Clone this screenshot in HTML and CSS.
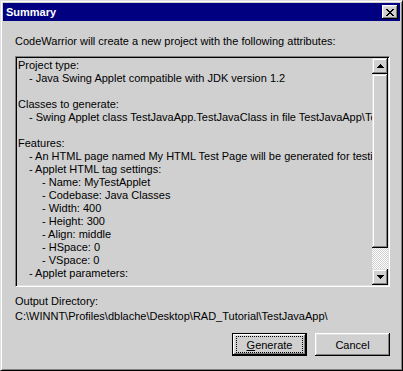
FILE: index.html
```html
<!DOCTYPE html>
<html>
	<head>
		<link rel="stylesheet" href="styles.css">
		<title>Summary</title>
	</head>
	<body>
		<main class="window">
			<header class="titlebar">
				<span class="title">Summary</span>
				<button class="close" aria-label="Close">
					<svg width="8" height="7" viewBox="0 0 8 7" shape-rendering="crispEdges">
						<path d="M0 0h2v1h-2zM6 0h2v1h-2zM1 1h2v1h-2zM5 1h2v1h-2zM2 2h4v1h-4zM3 3h2v1h-2zM2 4h4v1h-4zM1 5h2v1h-2zM5 5h2v1h-2zM0 6h2v1h-2zM6 6h2v1h-2z" fill="#000"/>
					</svg>
				</button>
			</header>
			<section class="content">
				<p class="intro">CodeWarrior will create a new project with the following attributes:</p>
				<div class="listbox">
					<div class="list-text">
						<div>Project type:</div>
						<div class="i1">- Java Swing Applet compatible with JDK version 1.2</div>
						<div class="blank"></div>
						<div>Classes to generate:</div>
						<div class="i1">- Swing Applet class TestJavaApp.TestJavaClass in file TestJavaApp\TestJavaClass.java</div>
						<div class="blank"></div>
						<div>Features:</div>
						<div class="i1">- An HTML page named My HTML Test Page will be generated for testing</div>
						<div class="i1">- Applet HTML tag settings:</div>
						<div class="i2">- Name: MyTestApplet</div>
						<div class="i2">- Codebase: Java Classes</div>
						<div class="i2">- Width: 400</div>
						<div class="i2">- Height: 300</div>
						<div class="i2">- Align: middle</div>
						<div class="i2">- HSpace: 0</div>
						<div class="i2">- VSpace: 0</div>
						<div class="i1">- Applet parameters:</div>
					</div>
					<div class="scrollbar">
						<div class="sb-btn">
							<svg width="7" height="4" viewBox="0 0 7 4" shape-rendering="crispEdges">
								<path d="M3 0h1v1h-1zM2 1h3v1h-3zM1 2h5v1h-5zM0 3h7v1h-7z" fill="#000"/>
							</svg>
						</div>
						<div class="sb-thumb"></div>
						<div class="sb-track"></div>
						<div class="sb-btn">
							<svg width="7" height="4" viewBox="0 0 7 4" shape-rendering="crispEdges">
								<path d="M0 0h7v1h-7zM1 1h5v1h-5zM2 2h3v1h-3zM3 3h1v1h-1z" fill="#000"/>
							</svg>
						</div>
					</div>
				</div>
				<p class="label">Output Directory:</p>
				<p class="path">C:\WINNT\Profiles\dblache\Desktop\RAD_Tutorial\TestJavaApp\</p>
				<div class="buttons">
					<button class="btn default"><span class="focus"><u>G</u>enerate</span></button>
					<button class="btn">Cancel</button>
				</div>
			</section>
		</main>
	</body>
</html>
```
FILE: styles.css
```css
body{ margin: 0; background: #d0d0d0; }
.window{
	box-sizing: border-box; width: 403px; height: 371px;
	display: flex; flex-direction: column;
	background: #d0d0d0; color: #000;
	font: 11px "Liberation Sans", Arial, sans-serif;
	border: 1px solid; border-color: #dfdfdf #000 #000 #dfdfdf;
	box-shadow: inset 1px 1px #fff, inset -1px -1px #808080;
	padding: 2px;
}
.titlebar{
	height: 18px; display: flex; align-items: center; justify-content: space-between;
	background: #000080; color: #fff; font-weight: bold;
	padding: 0 2px 0 3px;
}
.close{
	width: 16px; height: 14px; box-sizing: border-box; padding: 1px 0 0; border: none;
	display: flex; align-items: center; justify-content: center;
	background: #d0d0d0;
	box-shadow: inset -1px -1px #000, inset 1px 1px #fff, inset -2px -2px #808080, inset 2px 2px #dfdfdf;
}
.close svg, .sb-btn svg{ display: block; }
.content{ flex: 1; display: flex; flex-direction: column; padding: 14px 10px 0 12px; }
.intro, .label, .path{ margin: 0; line-height: 13px; white-space: nowrap; }
.listbox{
	margin-top: 8px; height: 231px; box-sizing: border-box; display: flex;
	border: 1px solid; border-color: #808080 #fff #fff #808080;
	box-shadow: inset 1px 1px #000, inset -1px -1px #dfdfdf;
	padding: 1px;
}
.list-text{ flex: 1; min-width: 0; overflow: hidden; white-space: nowrap; line-height: 13px; padding: 1px 0 0 1px; }
.blank{ height: 13px; }
.i1{ padding-left: 11px; }
.i2{ padding-left: 24px; }
.scrollbar{ width: 16px; display: flex; flex-direction: column; }
.sb-btn, .sb-thumb{
	box-sizing: border-box; background: #d0d0d0;
	box-shadow: inset -1px -1px #000, inset 1px 1px #dfdfdf, inset -2px -2px #808080, inset 2px 2px #fff;
}
.sb-btn{ height: 16px; display: flex; align-items: center; justify-content: center; padding-left: 1px; }
.sb-thumb{ height: 174px; }
.sb-track{ flex: 1; background: repeating-conic-gradient(#fff 0 25%, #d0d0d0 0 50%) 0 0 / 2px 2px; }
.label{ margin-top: 8px; }
.path{ margin-top: 2px; }
.buttons{ margin-top: 10px; display: flex; justify-content: flex-end; gap: 8px; }
.btn{
	width: 75px; height: 23px; box-sizing: border-box; font: inherit; color: #000;
	background: #d0d0d0; border: none; padding: 0;
	box-shadow: inset -1px -1px #000, inset 1px 1px #fff, inset -2px -2px #808080, inset 2px 2px #dfdfdf;
}
.btn.default{
	display: flex; padding: 2px 3px; border: 1px solid #000;
}
.focus{ flex: 1; display: flex; align-items: center; justify-content: center; border: 1px dotted #000; }
.focus u{ text-underline-offset: 1px; }
```
